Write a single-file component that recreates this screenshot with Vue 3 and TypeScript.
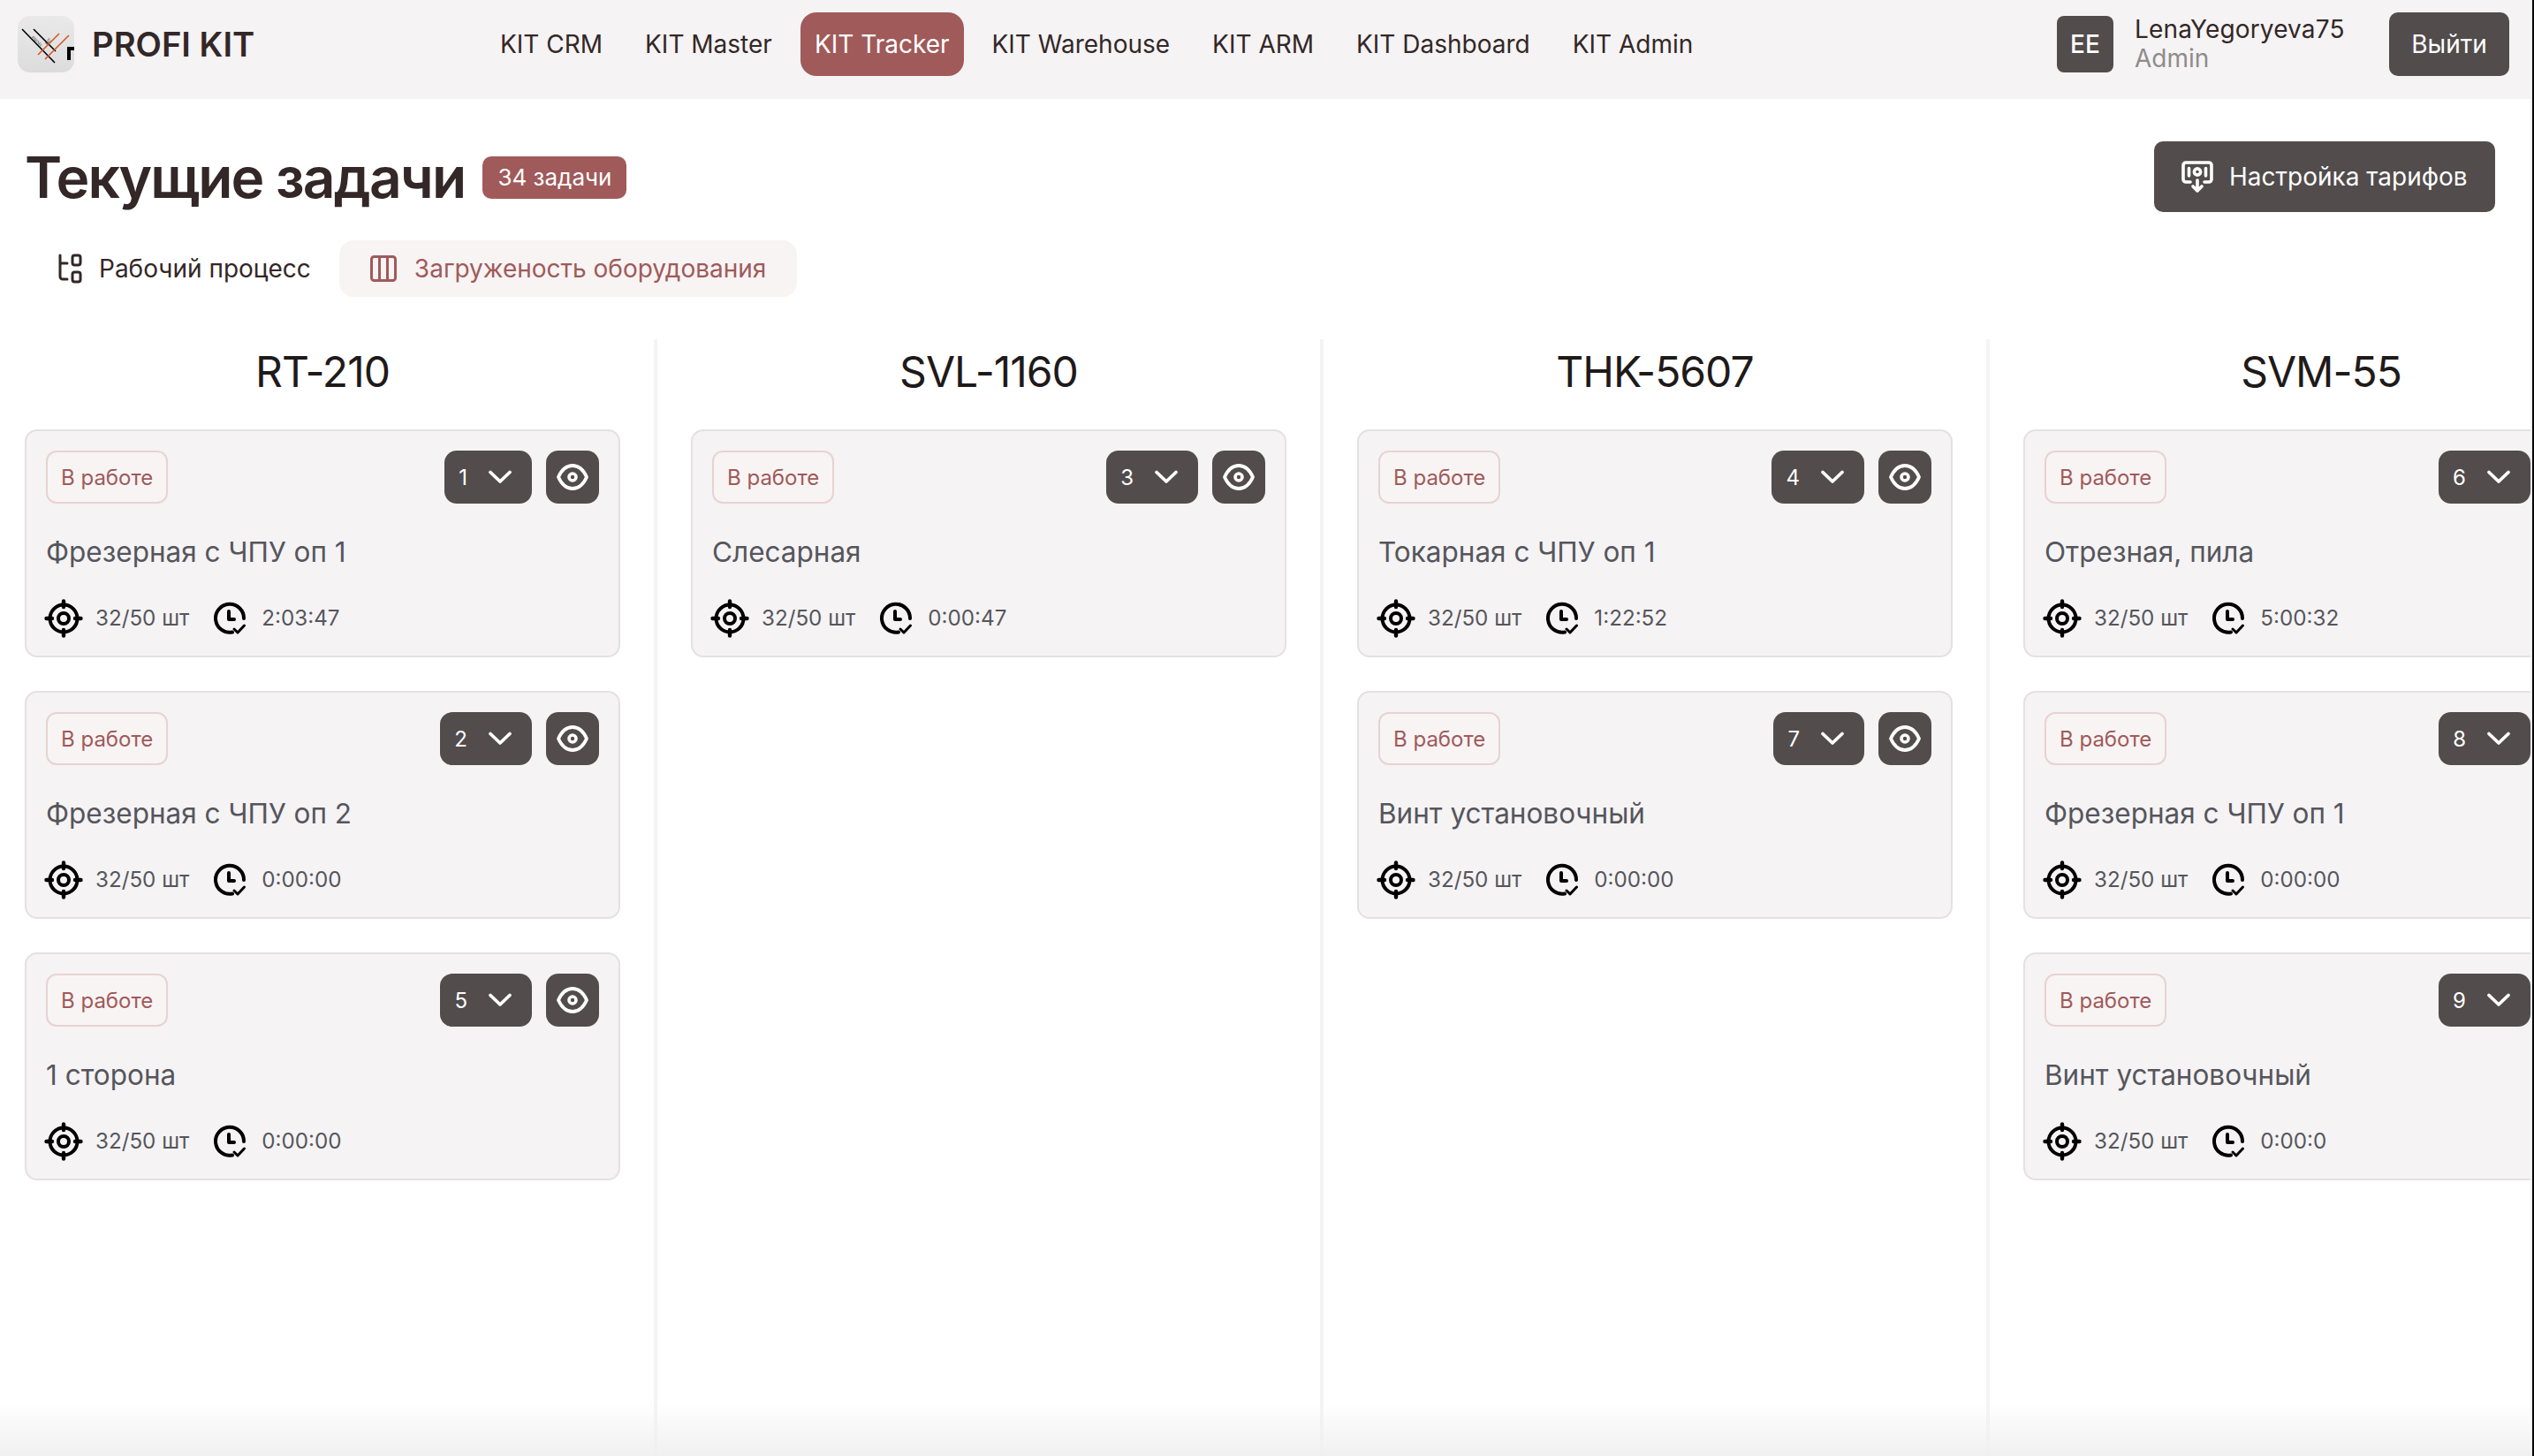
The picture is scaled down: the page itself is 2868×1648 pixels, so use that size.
<script setup lang="ts">
interface Task { n: number; title: string; time: string }
interface Col { name: string; tasks: Task[] }
const nav = ['KIT CRM', 'KIT Master', 'KIT Tracker', 'KIT Warehouse', 'KIT ARM', 'KIT Dashboard', 'KIT Admin']
const cols: Col[] = [
  { name: 'RT-210', tasks: [
    { n: 1, title: 'Фрезерная с ЧПУ оп 1', time: '2:03:47' },
    { n: 2, title: 'Фрезерная с ЧПУ оп 2', time: '0:00:00' },
    { n: 5, title: '1 сторона', time: '0:00:00' },
  ] },
  { name: 'SVL-1160', tasks: [{ n: 3, title: 'Слесарная', time: '0:00:47' }] },
  { name: 'THK-5607', tasks: [
    { n: 4, title: 'Токарная с ЧПУ оп 1', time: '1:22:52' },
    { n: 7, title: 'Винт установочный', time: '0:00:00' },
  ] },
  { name: 'SVM-55', tasks: [
    { n: 6, title: 'Отрезная, пила', time: '5:00:32' },
    { n: 8, title: 'Фрезерная с ЧПУ оп 1', time: '0:00:00' },
    { n: 9, title: 'Винт установочный', time: '0:00:0' },
  ] },
]
</script>

<template>
  <div class="page">
    <header class="top">
      <div class="brand">
        <svg class="logo" viewBox="0 0 64 64">
          <defs>
            <linearGradient id="lg" x1="0" y1="0" x2="0" y2="1">
              <stop offset="0" stop-color="#e9e9e9" />
              <stop offset="1" stop-color="#dcdcdc" />
            </linearGradient>
          </defs>
          <rect width="64" height="64" rx="14" fill="url(#lg)" />
          <path d="M5 15 L42 53 M18 15 L43 40" stroke="#000" stroke-width="1.6" fill="none" />
          <path d="M23 44 L47 20 M31 49 L58 22" stroke="#d4582a" stroke-width="1.6" fill="none" />
          <text x="15" y="25" font-size="5" fill="#444" transform="rotate(45 15 25)" font-family="Inter, sans-serif">PROFI</text>
          <text x="33" y="33" font-size="5" fill="#444" transform="rotate(-45 33 33)" font-family="Inter, sans-serif">KIT</text>
          <path d="M56 50 V35 H64 V39 H60 V50 Z" fill="#000" />
        </svg>
        <span class="brand-name">PROFI KIT</span>
      </div>
      <nav class="nav">
        <a v-for="item in nav" :key="item" class="nav-item" :class="{ active: item === 'KIT Tracker' }">{{ item }}</a>
      </nav>
      <div class="user">
        <div class="avatar">EE</div>
        <div class="who">
          <div class="who-name">LenaYegoryeva75</div>
          <div class="who-role">Admin</div>
        </div>
        <button class="logout">Выйти</button>
      </div>
    </header>

    <section class="head">
      <div class="title-row">
        <h1>Текущие задачи</h1>
        <span class="count">34 задачи</span>
      </div>
      <button class="tariff">
        <svg width="36" height="37" viewBox="0 0 36 37" fill="none" stroke="#fff" stroke-width="3.6" stroke-linecap="round" stroke-linejoin="round">
          <path d="M10 24 H5 a3 3 0 0 1 -3 -3 V5 a3 3 0 0 1 3 -3 H31 a3 3 0 0 1 3 3 V21 a3 3 0 0 1 -3 3 H26" />
          <path d="M8.5 8.5 V17 M27.5 8.5 V17" />
          <circle cx="18" cy="12.5" r="3.6" />
          <path d="M18 22 V34 M13 29 L18 34 L23 29" />
        </svg>
        <span>Настройка тарифов</span>
      </button>
    </section>

    <div class="tabs">
      <div class="tab">
        <svg width="28" height="34" viewBox="0 0 28 34" fill="none" stroke="#332727" stroke-width="3" stroke-linecap="round" stroke-linejoin="round">
          <path d="M3 2 V26 a3 3 0 0 0 3 3 H11 M3 11 H11" />
          <rect x="17" y="2" width="9" height="11" rx="2.5" />
          <rect x="17" y="21" width="9" height="11" rx="2.5" />
        </svg>
        <span>Рабочий процесс</span>
      </div>
      <div class="tab tab-on">
        <svg width="30" height="30" viewBox="0 0 30 30" fill="none" stroke="#a05a5a" stroke-width="3" stroke-linejoin="round">
          <rect x="1.5" y="1.5" width="27" height="27" rx="3" />
          <path d="M10.5 1.5 V28.5 M19.5 1.5 V28.5" />
        </svg>
        <span>Загруженость оборудования</span>
      </div>
    </div>

    <main class="board">
      <div v-for="col in cols" :key="col.name" class="col">
        <h2>{{ col.name }}</h2>
        <div class="stack">
          <article v-for="t in col.tasks" :key="t.n" class="card">
            <div class="card-top">
              <span class="status">В работе</span>
              <div class="actions">
                <div class="select">
                  <span>{{ t.n }}</span>
                  <svg width="40" height="40" viewBox="0 0 40 40" fill="none" stroke="#fff" stroke-width="3.8" stroke-linecap="round" stroke-linejoin="round">
                    <path d="M9 14.5 L20 25 L31 14.5" />
                  </svg>
                </div>
                <div class="eye">
                  <svg width="38" height="38" viewBox="0 0 38 38" fill="none" stroke="#fff" stroke-width="3.8">
                    <path d="M3 19 C7 10 13 6 19 6 C25 6 31 10 35 19 C31 28 25 32 19 32 C13 32 7 28 3 19 Z" stroke-linejoin="round" />
                    <circle cx="19" cy="19" r="4" stroke-width="3.6" />
                  </svg>
                </div>
              </div>
            </div>
            <div class="task">{{ t.title }}</div>
            <div class="stats">
              <svg class="ic-target" width="44" height="44" viewBox="0 0 44 44" fill="none" stroke="#000" stroke-width="4" stroke-linecap="round">
                <circle cx="22" cy="22" r="15.5" />
                <circle cx="22" cy="22" r="6" />
                <path d="M22 2.5 V9 M22 35 V41.5 M2.5 22 H9 M35 22 H41.5" stroke-width="4.4" />
              </svg>
              <span class="num">32/50 шт</span>
              <svg class="ic-clock" width="38" height="38" viewBox="0 0 38 38" fill="none" stroke="#000" stroke-width="4" stroke-linecap="round" stroke-linejoin="round">
                <path d="M22 34.5 A16 16 0 1 1 35 19" />
                <path d="M18 11 V20 H24" />
                <path d="M24 31 L28 35 L35.5 27" stroke-width="3" />
              </svg>
              <span class="num">{{ t.time }}</span>
            </div>
          </article>
        </div>
      </div>
    </main>

    <div class="fade"></div>
    <div class="edge"></div>
  </div>
</template>

<style>
html, body { margin: 0; background: #fff; overflow: hidden; }
</style>

<style scoped>
.page {
  position: relative;
  width: 2868px;
  height: 1648px;
  overflow: hidden;
  background: #fff;
  font-family: Inter, "Noto Sans", sans-serif;
  color: #332727;
}
.top {
  height: 112px;
  background: #f5f3f4;
  display: flex;
  align-items: center;
  padding: 0 28px 12px 20px;
  box-sizing: border-box;
}
.brand { display: flex; align-items: center; gap: 20px; width: 530px; flex: none; }
.logo { width: 64px; height: 64px; display: block; flex: none; }
.brand-name { font-size: 38.2px; font-weight: 600; color: #332727; line-height: 1; }
.nav { display: flex; align-items: center; gap: 16px; }
.nav-item {
  font-size: 28px;
  line-height: 40px;
  padding: 16px;
  border-radius: 18px;
  color: #332727;
  white-space: nowrap;
}
.nav-item.active { background: #a05a5a; color: #fff; }
.user { margin-left: auto; display: flex; align-items: center; }
.avatar {
  width: 64px; height: 64px; border-radius: 8px;
  background: #524c4c; color: #fff; font-size: 28px; font-weight: 500;
  display: flex; align-items: center; justify-content: center;
}
.who { margin-left: 24px; width: 288px; }
.who-name { font-size: 28px; line-height: 33px; color: #332727; letter-spacing: 0.15px; }
.who-role { font-size: 28px; line-height: 33px; color: #8f8b8b; }
.logout {
  width: 136px; height: 72px; border: 0; border-radius: 10px;
  background: #524c4c; color: #fff; font: inherit; font-size: 28px;
}
.head {
  display: flex; align-items: center; justify-content: space-between;
  padding: 48px 44px 0 28px;
}
.title-row { display: flex; align-items: center; gap: 20px; }
h1 { margin: 0; font-size: 64px; line-height: 80px; font-weight: 600; color: #332727; letter-spacing: -1.8px; position: relative; top: 1px; }
.count {
  background: #a05a5a; color: #fff; border-radius: 10px;
  font-size: 26px; line-height: 48px; padding: 0 17px; position: relative; top: 1px;
}
.tariff {
  height: 80px; width: 386px; border: 0; border-radius: 10px;
  background: #524c4c; color: #fff; font: inherit; font-size: 28px;
  display: flex; align-items: center; justify-content: flex-start; gap: 18px; padding: 0 0 0 31px;
}
.tabs { display: flex; padding: 32px 0 0 28px; }
.tab {
  height: 64px; display: flex; align-items: center; gap: 19px;
  font-size: 28px; padding: 0 32px 0 37px; border-radius: 16px; color: #332727;
}
.tab-on { background: #f8f4f4; color: #a05a5a; padding: 0 35px 0 35px; gap: 20px; }
.board { display: flex; margin-top: 48px; height: 1400px; }
.col {
  flex: none; width: 754px; box-sizing: border-box;
  padding: 0 38px; border-right: 4px solid #f5f4f4;
}
.col:first-child { width: 744px; padding-left: 28px; }
.col:last-child { border-right: 0; }
h2 {
  margin: 0; text-align: center; font-size: 48px; font-weight: 400;
  line-height: 60px; padding-top: 7px; color: #1f1a1a; letter-spacing: -1px; width: 674px;
}
.stack { display: flex; flex-direction: column; gap: 38px; margin-top: 35px; }
.card {
  width: 674px; height: 258px; box-sizing: border-box;
  background: #f5f3f4; border: 2px solid #e3e1e1; border-radius: 14px;
  padding: 22px 22px 0;
}
.card-top { display: flex; justify-content: space-between; align-items: center; }
.status {
  height: 60px; box-sizing: border-box; display: flex; align-items: center;
  padding: 0 15px; background: #f8f4f4; border: 2px solid #e8d2d2; border-radius: 12px;
  color: #a05a5a; font-size: 24px;
}
.actions { display: flex; gap: 16px; }
.select {
  height: 60px; display: flex; align-items: center; gap: 17px; padding: 0 16px;
  background: #524c4c; border-radius: 14px; color: #fff; font-size: 24px;
}
.eye {
  width: 60px; height: 60px; background: #524c4c; border-radius: 14px;
  display: flex; align-items: center; justify-content: center;
}
.task { margin-top: 35px; font-size: 31.5px; line-height: 40px; color: #55565c; }
.stats { display: flex; align-items: center; margin-top: 33px; margin-left: -2px; }
.num { font-size: 24.2px; line-height: 36px; color: #55565c; white-space: nowrap; }
.ic-target { flex: none; margin-right: 14px; }
.ic-clock { flex: none; margin: 0 17px 0 27px; }
.fade {
  position: absolute; left: 0; right: 0; bottom: 0; height: 60px;
  background: linear-gradient(to bottom, rgba(240,240,240,0), rgba(240,240,240,1));
  pointer-events: none;
}
.edge {
  position: absolute; top: 0; right: 0; bottom: 0; width: 2px;
  background: #000; border-left: 2px solid #efefef;
}
</style>
